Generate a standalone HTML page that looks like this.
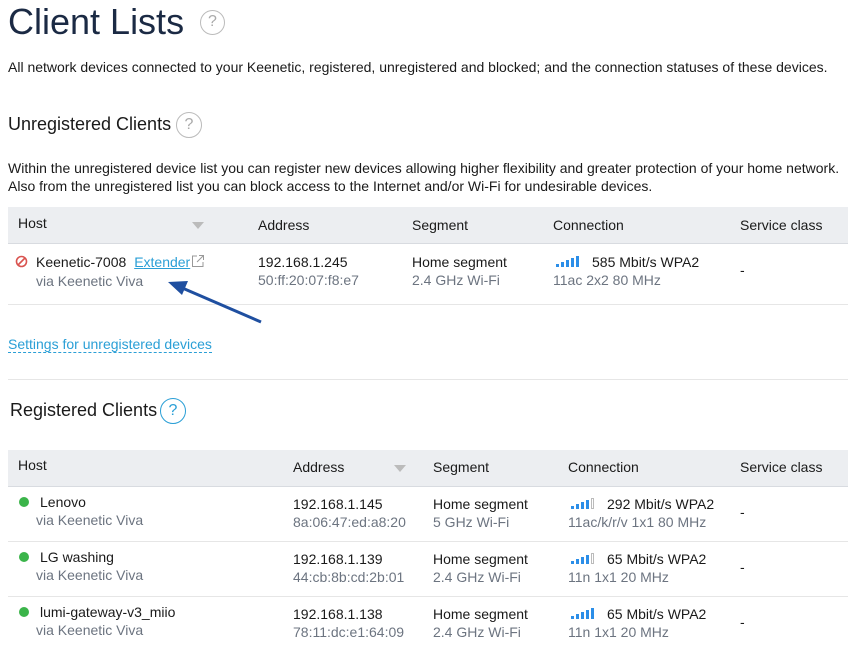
<!DOCTYPE html>
<html><head><meta charset="utf-8"><style>
*{margin:0;padding:0;box-sizing:border-box}
body{width:850px;height:652px;overflow:hidden;background:#fff;font-family:"Liberation Sans",sans-serif;color:#1a1a1a;position:relative;font-size:14px}
.a{position:absolute;white-space:nowrap}
.q{position:absolute;border:1.5px solid #bbb;border-radius:50%;color:#aaa;text-align:center;font-size:16px}
.hd{position:absolute;left:8px;width:840px;background:#eceef1;border-bottom:1px solid #d8dbe0}
.rw{position:absolute;left:8px;width:840px;border-bottom:1px solid #e6e6e6}
.g{color:#6c7480}
.dot{position:absolute;width:10px;height:10px;border-radius:50%;background:#3bb44a}
.sig{position:absolute;display:flex;align-items:flex-end;gap:2px;height:11px}
.sig i{display:block;width:3px;background:#2b8ee8}
.sig i.e{background:none;border:1px solid #bbb}
</style></head><body>
<div class="a" style="left:8px;top:0;font-size:36px;color:#1b2a44;line-height:44px">Client Lists</div>
<div class="q" style="left:200px;top:10px;width:25px;height:25px;line-height:22px">?</div>
<div class="a" style="left:8px;top:59px;font-size:14px">All network devices connected to your Keenetic, registered, unregistered and blocked; and the connection statuses of these devices.</div>
<div class="a" style="left:8px;top:114px;font-size:18px">Unregistered Clients</div>
<div class="q" style="left:176px;top:112px;width:26px;height:26px;line-height:23px">?</div>
<div class="a" style="left:8px;top:159px;font-size:14px;line-height:18px">Within the unregistered device list you can register new devices allowing higher flexibility and greater protection of your home network.<br>Also from the unregistered list you can block access to the Internet and/or Wi-Fi for undesirable devices.</div>

<div class="hd" style="top:207px;height:37px"></div>
<div class="a" style="left:18px;top:215px">Host</div>
<div class="a" style="left:192px;top:222px;width:0;height:0;border-left:6px solid transparent;border-right:6px solid transparent;border-top:7px solid #bbb"></div>
<div class="a" style="left:258px;top:217px">Address</div>
<div class="a" style="left:412px;top:217px">Segment</div>
<div class="a" style="left:553px;top:217px">Connection</div>
<div class="a" style="left:740px;top:217px">Service class</div>
<div class="rw" style="top:244px;height:61px"></div>
<svg class="a" style="left:15px;top:255px" width="13" height="13"><circle cx="6.5" cy="6.5" r="5" fill="none" stroke="#d9534f" stroke-width="1.6"/><line x1="3" y1="10" x2="10" y2="3" stroke="#d9534f" stroke-width="1.6"/></svg>
<div class="a" style="left:36px;top:254px">Keenetic-7008 <span style="color:#2a9fd6;text-decoration:underline;margin-left:4px">Extender</span></div>
<svg class="a" style="left:191px;top:254px" width="14" height="14"><path d="M6 2H1.5v10.5H12V8M8 1.5h4.5V6M12.5 1.5L6 8" fill="none" stroke="#999" stroke-width="1"/></svg>
<div class="a g" style="left:36px;top:273px">via Keenetic Viva</div>
<div class="a" style="left:258px;top:254px">192.168.1.245</div>
<div class="a g" style="left:258px;top:272px">50:ff:20:07:f8:e7</div>
<div class="a" style="left:412px;top:254px">Home segment</div>
<div class="a g" style="left:412px;top:272px">2.4 GHz Wi-Fi</div>
<div class="sig" style="left:556px;top:256px"><i style="height:3px"></i><i style="height:5px"></i><i style="height:7px"></i><i style="height:9px"></i><i style="height:11px"></i></div>
<div class="a" style="left:592px;top:254px">585 Mbit/s WPA2</div>
<div class="a g" style="left:553px;top:272px">11ac 2x2 80 MHz</div>
<div class="a" style="left:740px;top:262px">-</div>
<svg class="a" style="left:160px;top:275px" width="110" height="55"><line x1="101" y1="47" x2="20" y2="12" stroke="#1f4fa0" stroke-width="3"/><path d="M8 7L28 6L22 20Z" fill="#1f4fa0"/></svg>
<div class="a" style="left:8px;top:336px;color:#2a9fd6;border-bottom:1px dashed #2a9fd6;line-height:16px">Settings for unregistered devices</div>
<div class="a" style="left:8px;top:379px;width:840px;height:1px;background:#e6e6e6"></div>
<div class="a" style="left:10px;top:400px;font-size:18px">Registered Clients</div>
<div class="q" style="left:160px;top:398px;width:26px;height:26px;line-height:23px;border-color:#2a9fd6;color:#2a9fd6">?</div>

<div class="hd" style="top:450px;height:37px"></div>
<div class="a" style="left:18px;top:457px">Host</div>
<div class="a" style="left:293px;top:459px">Address</div>
<div class="a" style="left:394px;top:465px;width:0;height:0;border-left:6px solid transparent;border-right:6px solid transparent;border-top:7px solid #bbb"></div>
<div class="a" style="left:433px;top:459px">Segment</div>
<div class="a" style="left:568px;top:459px">Connection</div>
<div class="a" style="left:740px;top:459px">Service class</div>

<div class="rw" style="top:487px;height:55px"></div>
<div class="dot" style="left:19px;top:497px"></div>
<div class="a" style="left:40px;top:494px">Lenovo</div>
<div class="a g" style="left:36px;top:512px">via Keenetic Viva</div>
<div class="a" style="left:293px;top:496px">192.168.1.145</div>
<div class="a g" style="left:293px;top:514px">8a:06:47:ed:a8:20</div>
<div class="a" style="left:433px;top:496px">Home segment</div>
<div class="a g" style="left:433px;top:514px">5 GHz Wi-Fi</div>
<div class="sig" style="left:571px;top:498px"><i style="height:3px"></i><i style="height:5px"></i><i style="height:7px"></i><i style="height:9px"></i><i class="e" style="height:11px"></i></div>
<div class="a" style="left:607px;top:496px">292 Mbit/s WPA2</div>
<div class="a g" style="left:568px;top:514px">11ac/k/r/v 1x1 80 MHz</div>
<div class="a" style="left:740px;top:504px">-</div>

<div class="rw" style="top:542px;height:55px"></div>
<div class="dot" style="left:19px;top:552px"></div>
<div class="a" style="left:40px;top:549px">LG washing</div>
<div class="a g" style="left:36px;top:567px">via Keenetic Viva</div>
<div class="a" style="left:293px;top:551px">192.168.1.139</div>
<div class="a g" style="left:293px;top:569px">44:cb:8b:cd:2b:01</div>
<div class="a" style="left:433px;top:551px">Home segment</div>
<div class="a g" style="left:433px;top:569px">2.4 GHz Wi-Fi</div>
<div class="sig" style="left:571px;top:553px"><i style="height:3px"></i><i style="height:5px"></i><i style="height:7px"></i><i style="height:9px"></i><i class="e" style="height:11px"></i></div>
<div class="a" style="left:607px;top:551px">65 Mbit/s WPA2</div>
<div class="a g" style="left:568px;top:569px">11n 1x1 20 MHz</div>
<div class="a" style="left:740px;top:559px">-</div>

<div class="dot" style="left:19px;top:607px"></div>
<div class="a" style="left:40px;top:604px">lumi-gateway-v3_miio</div>
<div class="a g" style="left:36px;top:622px">via Keenetic Viva</div>
<div class="a" style="left:293px;top:606px">192.168.1.138</div>
<div class="a g" style="left:293px;top:624px">78:11:dc:e1:64:09</div>
<div class="a" style="left:433px;top:606px">Home segment</div>
<div class="a g" style="left:433px;top:624px">2.4 GHz Wi-Fi</div>
<div class="sig" style="left:571px;top:608px"><i style="height:3px"></i><i style="height:5px"></i><i style="height:7px"></i><i style="height:9px"></i><i style="height:11px"></i></div>
<div class="a" style="left:607px;top:606px">65 Mbit/s WPA2</div>
<div class="a g" style="left:568px;top:624px">11n 1x1 20 MHz</div>
<div class="a" style="left:740px;top:614px">-</div>
</body></html>
